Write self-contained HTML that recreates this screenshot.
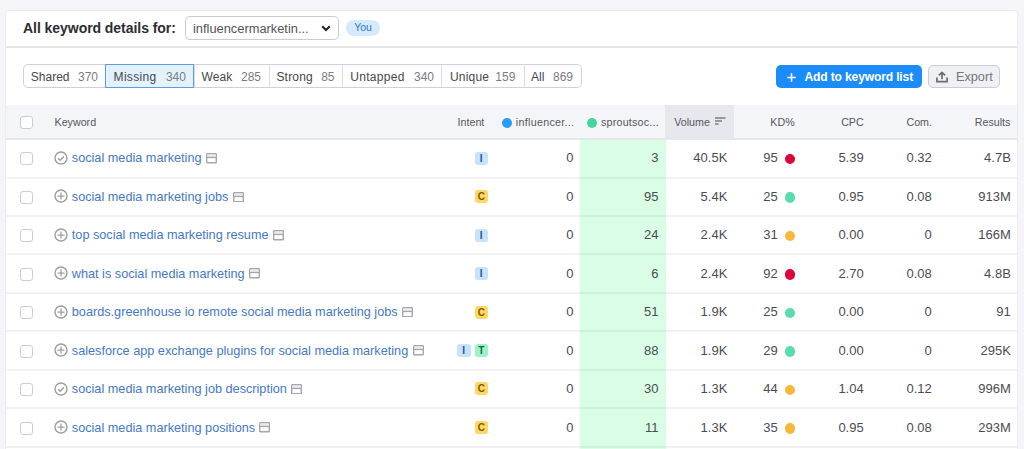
<!DOCTYPE html>
<html><head><meta charset="utf-8">
<style>
* { box-sizing:border-box; margin:0; padding:0; }
html,body { width:1024px; height:449px; overflow:hidden; background:#f4f4f9; font-family:"Liberation Sans", sans-serif; color:#333; position:relative; }
.abs { position:absolute; }
.card { position:absolute; left:5px; top:10px; width:1013px; height:460px; background:#fff; border:1px solid #ebebf0; border-radius:4px; }
.title { position:absolute; left:23px; top:20.3px; font-size:14px; line-height:16px; font-weight:bold; color:#2b2e33; white-space:nowrap; letter-spacing:-0.05px; }
.dd { position:absolute; left:185px; top:16px; width:154px; height:24px; border:1px solid #c9cbd2; border-radius:5px; background:#fff; }
.dd span { position:absolute; left:7px; top:5px; font-size:12.85px; line-height:14px; color:#555358; white-space:nowrap; }
.you { position:absolute; left:346px; top:19.5px; width:34px; height:16px; border-radius:8px; background:#d5ebfd; color:#2f77c8; font-size:10.5px; text-align:center; line-height:15px; }
.sep { position:absolute; left:6px; top:46px; width:1011px; height:2px; background:#e5e5e7; }
.fgrp { position:absolute; left:23px; top:64px; width:558.5px; height:24px; border:1px solid #cfd1d7; border-radius:5px; }
.f { position:absolute; top:64px; height:24px; font-size:12px; line-height:14px; white-space:nowrap; border-left:1px solid #d9dbe0; }
.f.first { border-left:none; }
.fl { position:absolute; top:69.5px; font-size:12px; line-height:14px; color:#45474c; white-space:nowrap; }
.fc { position:absolute; top:69.5px; font-size:12px; line-height:14px; color:#7a7c81; white-space:nowrap; }
.f.sel { background:#e4f2fe; border:1px solid #5c9ddd; }

.add { position:absolute; left:776px; top:64.5px; width:146px; height:23.5px; background:#1b8cfa; border-radius:5px; color:#fff; white-space:nowrap; }
.exp { position:absolute; left:928px; top:64.5px; width:71.5px; height:23px; background:#eff0f3; border:1px solid #cbcdd3; border-radius:5px; color:#727479; white-space:nowrap; }
.thead { position:absolute; left:6px; top:105px; width:1011px; height:34px; background:#f4f5f8; }
.hsep { position:absolute; left:6px; top:138px; width:1011px; height:1.5px; background:#e6e7ea; }
.th { position:absolute; top:115.6px; font-size:10.7px; line-height:12px; color:#55575c; white-space:nowrap; }
.row { position:absolute; left:0; width:1024px; height:38px; }
.rsep { position:absolute; left:6px; width:1011px; height:2px; background:rgba(30,30,50,0.058); }
.green { position:absolute; left:580px; top:139px; width:85.6px; height:320px; background:#dafde5; }
.cb { position:absolute; left:20px; top:13px; width:13px; height:13px; border:1px solid #cbcdd2; border-radius:3px; background:#fff; }
.kw { position:absolute; left:54px; top:12.5px; height:14px; white-space:nowrap; display:flex; align-items:center; }
.kw .ic { flex:none; position:relative; top:-1px; left:-0.4px; }
.kwt { position:relative; top:-0.5px; margin-left:3.8px; font-size:12.7px; line-height:14px; color:#4579c4; }
.kw .serp { flex:none; margin-left:4.3px; position:relative; top:-0.6px; }
.intent { position:absolute; right:536px; top:12.3px; display:flex; }
.ib { display:block; width:13.5px; height:13px; border-radius:3px; font-size:10px; font-weight:bold; text-align:center; line-height:13px; margin-left:4px; }
.num { position:absolute; top:12px; font-size:13px; line-height:14px; color:#4a4c51; white-space:nowrap; }
.dot { position:absolute; left:784.8px; top:14.5px; width:10.5px; height:10.5px; border-radius:50%; }
</style></head><body>
<div class="card"></div>
<div class="title">All keyword details for:</div>
<div class="dd"><span>influencermarketin...</span><svg class="abs" style="left:135px;top:8px" width="10" height="7" viewBox="0 0 10 7"><path d="M1.2 1.2 L5 5 L8.8 1.2" fill="none" stroke="#222" stroke-width="2"/></svg></div>
<div class="you">You</div>
<div class="sep"></div>
<div class="green"></div>
<div class="fgrp"></div>
<div class="f first" style="left:23.0px;width:82.2px"></div><span class="fl" style="left:30.7px;letter-spacing:0.03px">Shared</span><span class="fc" style="right:926.0px">370</span><div class="f sel" style="left:105.2px;width:88.9px"></div><span class="fl" style="left:113.6px;letter-spacing:0.3px">Missing</span><span class="fc" style="right:838.1px">340</span><div class="f" style="left:194.1px;width:74.8px"></div><span class="fl" style="left:201.6px;letter-spacing:0.05px">Weak</span><span class="fc" style="right:763.0px">285</span><div class="f" style="left:268.9px;width:73.1px"></div><span class="fl" style="left:276.4px;letter-spacing:0.2px">Strong</span><span class="fc" style="right:689.5px">85</span><div class="f" style="left:342.0px;width:99.3px"></div><span class="fl" style="left:350.3px;letter-spacing:0.28px">Untapped</span><span class="fc" style="right:590.0px">340</span><div class="f" style="left:441.3px;width:82.3px"></div><span class="fl" style="left:449.9px;letter-spacing:0.22px">Unique</span><span class="fc" style="right:508.7px">159</span><div class="f" style="left:523.6px;width:57.6px"></div><span class="fl" style="left:531px;letter-spacing:0px">All</span><span class="fc" style="right:451.0px">869</span>
<div class="add"><svg class="abs" style="left:10.5px;top:8.5px" width="9" height="9" viewBox="0 0 9 9"><path d="M4.5 0.3 V8.7 M0.3 4.5 H8.7" stroke="#fff" stroke-width="1.6"/></svg><span class="abs" style="left:28.5px;top:5.5px;font-size:12.1px;line-height:14px;font-weight:bold;letter-spacing:-0.16px">Add to keyword list</span></div>
<div class="exp"><svg class="abs" style="left:7px;top:5.2px" width="13" height="13" viewBox="0 0 13 13"><path d="M6 8.2 V1.4 M2.9 4.4 L6 1.3 L9.1 4.4 M0.9 6.6 V10.7 H11.1 V6.6" fill="none" stroke="#6a6c72" stroke-width="1.7" stroke-linejoin="round"/></svg><span class="abs" style="left:27px;top:4.6px;font-size:12.7px;line-height:14px">Export</span></div>
<div class="thead"></div>
<div class="abs" style="left:665px;top:105px;width:69px;height:34px;background:#e7e8ed"></div>
<div class="hsep"></div>
<div class="abs" style="left:20px;top:116px;width:13px;height:13px;border:1px solid #cbcdd2;border-radius:3px;background:#fff"></div>
<div class="th" style="left:54.5px">Keyword</div>
<div class="th" style="left:457.6px">Intent</div>
<div class="abs" style="left:502px;top:118px;width:10px;height:10px;border-radius:50%;background:#2b9cf6"></div>
<div class="th" style="left:515.8px;letter-spacing:0.3px">influencer...</div>
<div class="abs" style="left:587px;top:118px;width:10px;height:10px;border-radius:50%;background:#44d49c"></div>
<div class="th" style="left:601px;letter-spacing:0.22px">sproutsoc...</div>
<div class="th" style="left:674.2px">Volume</div>
<svg class="abs" style="left:715px;top:117.1px" width="11" height="8" viewBox="0 0 11 8"><path d="M0 1 H10.5 M0 4 H7 M0 7 H3.5" stroke="#7b7d82" stroke-width="1.3"/></svg>
<div class="th" style="right:229.29999999999995px">KD%</div>
<div class="th" style="right:160.29999999999995px">CPC</div>
<div class="th" style="right:92px">Com.</div>
<div class="th" style="right:13.600000000000023px">Results</div>
<div class="row" style="top:139.44px">
<div class="cb"></div>
<div class="kw"><svg class="ic" width="14" height="14" viewBox="0 0 14 14"><circle cx="7" cy="7" r="6" fill="none" stroke="#9c9ea2" stroke-width="1.4"/><path d="M4 7.3 L6.1 9.2 L9.9 5.4" fill="none" stroke="#9c9ea2" stroke-width="1.4"/></svg><span class="kwt">social media marketing</span><svg class="serp" width="11" height="10.5" viewBox="0 0 11 10.5"><rect x="0.7" y="0.7" width="9.6" height="9.1" rx="0.6" fill="#fff" stroke="#a4a6ab" stroke-width="1.4"/><rect x="1.4" y="1.4" width="8.2" height="2.6" fill="#e9e9eb"/><path d="M0.7 4.5 H10.3" stroke="#a4a6ab" stroke-width="1.3"/></svg></div>
<div class="intent"><span class="ib" style="background:#c7e3fc;color:#1f5596">I</span></div>
<div class="num" style="right:450.5px">0</div>
<div class="num" style="right:365.5px">3</div>
<div class="num" style="right:296.70000000000005px">40.5K</div>
<div class="num" style="right:246.29999999999995px">95</div>
<div class="dot" style="background:#e00039"></div>
<div class="num" style="right:160.29999999999995px">5.39</div>
<div class="num" style="right:92.20000000000005px">0.32</div>
<div class="num" style="right:13.200000000000045px">4.7B</div>
</div>
<div class="rsep" style="top:177.2px"></div><div class="row" style="top:177.90px">
<div class="cb"></div>
<div class="kw"><svg class="ic" width="14" height="14" viewBox="0 0 14 14"><circle cx="7" cy="7" r="6" fill="none" stroke="#9c9ea2" stroke-width="1.4"/><path d="M7 3.5 V10.5 M3.5 7 H10.5" fill="none" stroke="#9c9ea2" stroke-width="1.25"/></svg><span class="kwt">social media marketing jobs</span><svg class="serp" width="11" height="10.5" viewBox="0 0 11 10.5"><rect x="0.7" y="0.7" width="9.6" height="9.1" rx="0.6" fill="#fff" stroke="#a4a6ab" stroke-width="1.4"/><rect x="1.4" y="1.4" width="8.2" height="2.6" fill="#e9e9eb"/><path d="M0.7 4.5 H10.3" stroke="#a4a6ab" stroke-width="1.3"/></svg></div>
<div class="intent"><span class="ib" style="background:#fcd866;color:#8a5800">C</span></div>
<div class="num" style="right:450.5px">0</div>
<div class="num" style="right:365.5px">95</div>
<div class="num" style="right:296.70000000000005px">5.4K</div>
<div class="num" style="right:246.29999999999995px">25</div>
<div class="dot" style="background:#59ddaa"></div>
<div class="num" style="right:160.29999999999995px">0.95</div>
<div class="num" style="right:92.20000000000005px">0.08</div>
<div class="num" style="right:13.200000000000045px">913M</div>
</div>
<div class="rsep" style="top:215px"></div><div class="row" style="top:216.36px">
<div class="cb"></div>
<div class="kw"><svg class="ic" width="14" height="14" viewBox="0 0 14 14"><circle cx="7" cy="7" r="6" fill="none" stroke="#9c9ea2" stroke-width="1.4"/><path d="M7 3.5 V10.5 M3.5 7 H10.5" fill="none" stroke="#9c9ea2" stroke-width="1.25"/></svg><span class="kwt">top social media marketing resume</span><svg class="serp" width="11" height="10.5" viewBox="0 0 11 10.5"><rect x="0.7" y="0.7" width="9.6" height="9.1" rx="0.6" fill="#fff" stroke="#a4a6ab" stroke-width="1.4"/><rect x="1.4" y="1.4" width="8.2" height="2.6" fill="#e9e9eb"/><path d="M0.7 4.5 H10.3" stroke="#a4a6ab" stroke-width="1.3"/></svg></div>
<div class="intent"><span class="ib" style="background:#c7e3fc;color:#1f5596">I</span></div>
<div class="num" style="right:450.5px">0</div>
<div class="num" style="right:365.5px">24</div>
<div class="num" style="right:296.70000000000005px">2.4K</div>
<div class="num" style="right:246.29999999999995px">31</div>
<div class="dot" style="background:#f8b83b"></div>
<div class="num" style="right:160.29999999999995px">0.00</div>
<div class="num" style="right:92.20000000000005px">0</div>
<div class="num" style="right:13.200000000000045px">166M</div>
</div>
<div class="rsep" style="top:253.4px"></div><div class="row" style="top:254.82px">
<div class="cb"></div>
<div class="kw"><svg class="ic" width="14" height="14" viewBox="0 0 14 14"><circle cx="7" cy="7" r="6" fill="none" stroke="#9c9ea2" stroke-width="1.4"/><path d="M7 3.5 V10.5 M3.5 7 H10.5" fill="none" stroke="#9c9ea2" stroke-width="1.25"/></svg><span class="kwt">what is social media marketing</span><svg class="serp" width="11" height="10.5" viewBox="0 0 11 10.5"><rect x="0.7" y="0.7" width="9.6" height="9.1" rx="0.6" fill="#fff" stroke="#a4a6ab" stroke-width="1.4"/><rect x="1.4" y="1.4" width="8.2" height="2.6" fill="#e9e9eb"/><path d="M0.7 4.5 H10.3" stroke="#a4a6ab" stroke-width="1.3"/></svg></div>
<div class="intent"><span class="ib" style="background:#c7e3fc;color:#1f5596">I</span></div>
<div class="num" style="right:450.5px">0</div>
<div class="num" style="right:365.5px">6</div>
<div class="num" style="right:296.70000000000005px">2.4K</div>
<div class="num" style="right:246.29999999999995px">92</div>
<div class="dot" style="background:#e00039"></div>
<div class="num" style="right:160.29999999999995px">2.70</div>
<div class="num" style="right:92.20000000000005px">0.08</div>
<div class="num" style="right:13.200000000000045px">4.8B</div>
</div>
<div class="rsep" style="top:291.6px"></div><div class="row" style="top:293.28px">
<div class="cb"></div>
<div class="kw"><svg class="ic" width="14" height="14" viewBox="0 0 14 14"><circle cx="7" cy="7" r="6" fill="none" stroke="#9c9ea2" stroke-width="1.4"/><path d="M7 3.5 V10.5 M3.5 7 H10.5" fill="none" stroke="#9c9ea2" stroke-width="1.25"/></svg><span class="kwt">boards.greenhouse io remote social media marketing jobs</span><svg class="serp" width="11" height="10.5" viewBox="0 0 11 10.5"><rect x="0.7" y="0.7" width="9.6" height="9.1" rx="0.6" fill="#fff" stroke="#a4a6ab" stroke-width="1.4"/><rect x="1.4" y="1.4" width="8.2" height="2.6" fill="#e9e9eb"/><path d="M0.7 4.5 H10.3" stroke="#a4a6ab" stroke-width="1.3"/></svg></div>
<div class="intent"><span class="ib" style="background:#fcd866;color:#8a5800">C</span></div>
<div class="num" style="right:450.5px">0</div>
<div class="num" style="right:365.5px">51</div>
<div class="num" style="right:296.70000000000005px">1.9K</div>
<div class="num" style="right:246.29999999999995px">25</div>
<div class="dot" style="background:#59ddaa"></div>
<div class="num" style="right:160.29999999999995px">0.00</div>
<div class="num" style="right:92.20000000000005px">0</div>
<div class="num" style="right:13.200000000000045px">91</div>
</div>
<div class="rsep" style="top:330.2px"></div><div class="row" style="top:331.74px">
<div class="cb"></div>
<div class="kw"><svg class="ic" width="14" height="14" viewBox="0 0 14 14"><circle cx="7" cy="7" r="6" fill="none" stroke="#9c9ea2" stroke-width="1.4"/><path d="M7 3.5 V10.5 M3.5 7 H10.5" fill="none" stroke="#9c9ea2" stroke-width="1.25"/></svg><span class="kwt">salesforce app exchange plugins for social media marketing</span><svg class="serp" width="11" height="10.5" viewBox="0 0 11 10.5"><rect x="0.7" y="0.7" width="9.6" height="9.1" rx="0.6" fill="#fff" stroke="#a4a6ab" stroke-width="1.4"/><rect x="1.4" y="1.4" width="8.2" height="2.6" fill="#e9e9eb"/><path d="M0.7 4.5 H10.3" stroke="#a4a6ab" stroke-width="1.3"/></svg></div>
<div class="intent"><span class="ib" style="background:#c7e3fc;color:#1f5596">I</span><span class="ib" style="background:#9ef0c8;color:#00704f">T</span></div>
<div class="num" style="right:450.5px">0</div>
<div class="num" style="right:365.5px">88</div>
<div class="num" style="right:296.70000000000005px">1.9K</div>
<div class="num" style="right:246.29999999999995px">29</div>
<div class="dot" style="background:#59ddaa"></div>
<div class="num" style="right:160.29999999999995px">0.00</div>
<div class="num" style="right:92.20000000000005px">0</div>
<div class="num" style="right:13.200000000000045px">295K</div>
</div>
<div class="rsep" style="top:368.5px"></div><div class="row" style="top:370.20px">
<div class="cb"></div>
<div class="kw"><svg class="ic" width="14" height="14" viewBox="0 0 14 14"><circle cx="7" cy="7" r="6" fill="none" stroke="#9c9ea2" stroke-width="1.4"/><path d="M4 7.3 L6.1 9.2 L9.9 5.4" fill="none" stroke="#9c9ea2" stroke-width="1.4"/></svg><span class="kwt">social media marketing job description</span><svg class="serp" width="11" height="10.5" viewBox="0 0 11 10.5"><rect x="0.7" y="0.7" width="9.6" height="9.1" rx="0.6" fill="#fff" stroke="#a4a6ab" stroke-width="1.4"/><rect x="1.4" y="1.4" width="8.2" height="2.6" fill="#e9e9eb"/><path d="M0.7 4.5 H10.3" stroke="#a4a6ab" stroke-width="1.3"/></svg></div>
<div class="intent"><span class="ib" style="background:#fcd866;color:#8a5800">C</span></div>
<div class="num" style="right:450.5px">0</div>
<div class="num" style="right:365.5px">30</div>
<div class="num" style="right:296.70000000000005px">1.3K</div>
<div class="num" style="right:246.29999999999995px">44</div>
<div class="dot" style="background:#f8b83b"></div>
<div class="num" style="right:160.29999999999995px">1.04</div>
<div class="num" style="right:92.20000000000005px">0.12</div>
<div class="num" style="right:13.200000000000045px">996M</div>
</div>
<div class="rsep" style="top:407.2px"></div><div class="row" style="top:408.66px">
<div class="cb"></div>
<div class="kw"><svg class="ic" width="14" height="14" viewBox="0 0 14 14"><circle cx="7" cy="7" r="6" fill="none" stroke="#9c9ea2" stroke-width="1.4"/><path d="M7 3.5 V10.5 M3.5 7 H10.5" fill="none" stroke="#9c9ea2" stroke-width="1.25"/></svg><span class="kwt">social media marketing positions</span><svg class="serp" width="11" height="10.5" viewBox="0 0 11 10.5"><rect x="0.7" y="0.7" width="9.6" height="9.1" rx="0.6" fill="#fff" stroke="#a4a6ab" stroke-width="1.4"/><rect x="1.4" y="1.4" width="8.2" height="2.6" fill="#e9e9eb"/><path d="M0.7 4.5 H10.3" stroke="#a4a6ab" stroke-width="1.3"/></svg></div>
<div class="intent"><span class="ib" style="background:#fcd866;color:#8a5800">C</span></div>
<div class="num" style="right:450.5px">0</div>
<div class="num" style="right:365.5px">11</div>
<div class="num" style="right:296.70000000000005px">1.3K</div>
<div class="num" style="right:246.29999999999995px">35</div>
<div class="dot" style="background:#f8b83b"></div>
<div class="num" style="right:160.29999999999995px">0.95</div>
<div class="num" style="right:92.20000000000005px">0.08</div>
<div class="num" style="right:13.200000000000045px">293M</div>
</div>
<div class="rsep" style="top:445.6px"></div>
</body></html>
